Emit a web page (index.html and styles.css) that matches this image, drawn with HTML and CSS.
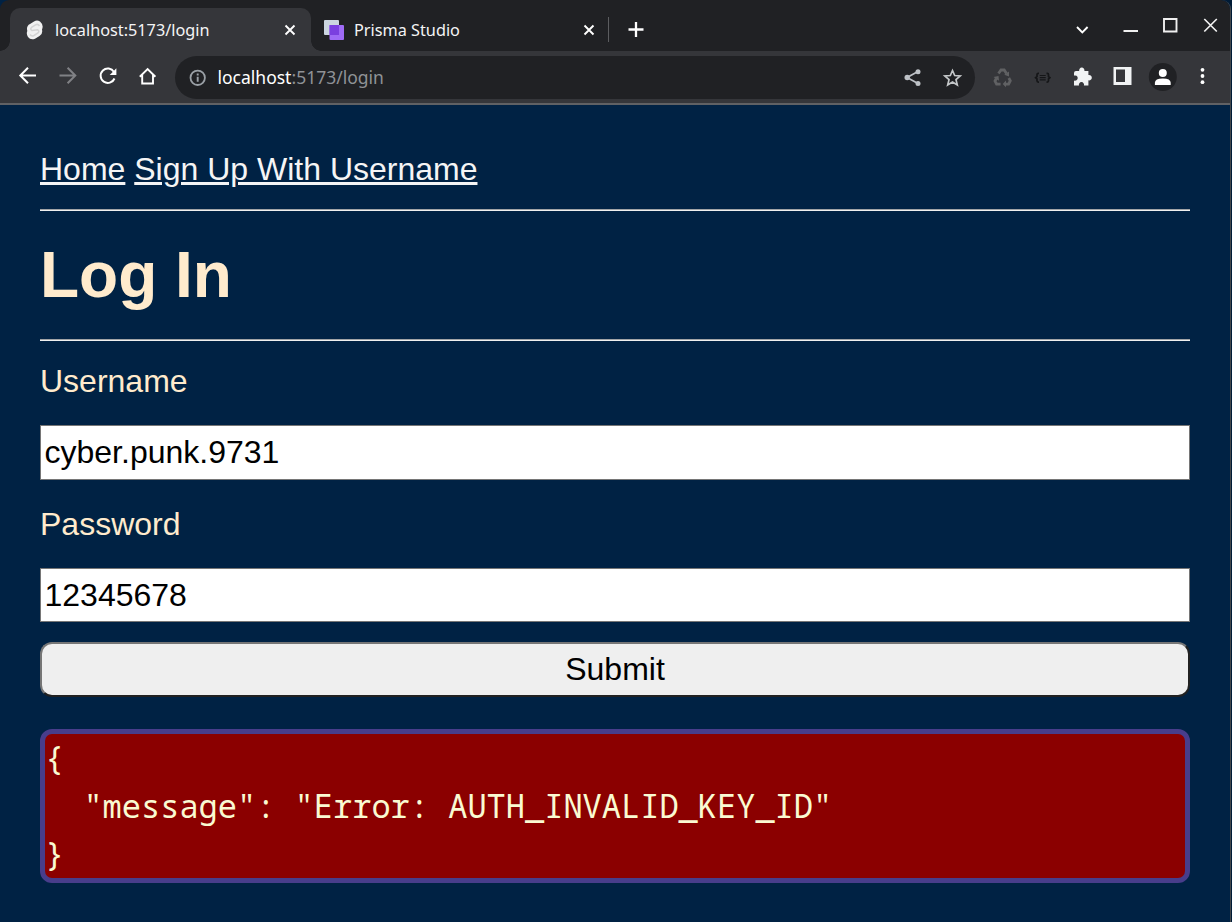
FILE: index.html
```html
<!DOCTYPE html>
<html lang="en">
<head>
<meta charset="utf-8">
<title>localhost:5173/login</title>
<link rel="stylesheet" href="styles.css">
</head>
<body>
<div class="window">
  <header class="tabstrip">
    <div class="tab tab-active">
      <svg class="favicon" width="20" height="20" viewBox="0 0 20 20"><path d="M9 1.500Q12-.5 15 1.500Q19 5 17 9.500Q18 14 14.500 16L10 18.800Q5.500 20.500 3 17Q1 14 2.300 11Q1 6 5 4Z" fill="#f1f1f1"/><path d="M14.500 6Q13 3.500 10.500 4.800L6.500 7.400Q4.600 9.500 7 10.500L12.500 9.700Q15 11 13 13L9 15.500Q6.500 16.700 5 14.500" fill="none" stroke="#d4d4d4" stroke-width="1.500"/></svg>
      <span class="tab-title">localhost:5173/login</span>
      <svg class="tab-close" width="12" height="12" viewBox="0 0 12 12"><path d="M1.500 1.500l9 9M10.500 1.500l-9 9" stroke="#fff" stroke-width="1.900"/></svg>
    </div>
    <div class="tab tab-idle">
      <svg class="favicon" width="22" height="22" viewBox="0 0 22 22"><rect x="1" y="1" width="15" height="15" rx="1" fill="#cbd5e0"/><rect x="6.500" y="6" width="14.500" height="15" rx="1" fill="#9f6bf6"/><path d="M6.500 6H16v10H6.500z" fill="#7b3fe0"/></svg>
      <span class="tab-title">Prisma Studio</span>
      <svg class="tab-close" width="12" height="12" viewBox="0 0 12 12"><path d="M1.500 1.500l9 9M10.500 1.500l-9 9" stroke="#fff" stroke-width="1.900"/></svg>
    </div>
    <span class="tab-divider"></span>
    <svg class="new-tab" width="16" height="16" viewBox="0 0 16 16"><path d="M8 1v15M.5 8.500h15" stroke="#fff" stroke-width="2.300"/></svg>
    <div class="window-controls">
      <svg class="tab-search" width="40" height="50" viewBox="0 0 40 50"><path d="M15 27l5.300 5.300L25.600 27" fill="none" stroke="#fff" stroke-width="1.900"/></svg>
      <svg width="40" height="50" viewBox="0 0 40 50"><path d="M13.500 31h14.500" stroke="#f0f0f0" stroke-width="2"/></svg>
      <svg width="40" height="50" viewBox="0 0 40 50"><path d="M14 19h12.500v12.500H14z" fill="none" stroke="#f0f0f0" stroke-width="1.900"/></svg>
      <svg width="40" height="50" viewBox="0 0 40 50"><path d="M14.300 19l12.500 12.500M26.800 19L14.300 31.500" stroke="#f0f0f0" stroke-width="1.700"/></svg>
    </div>
  </header>

  <div class="toolbar">
    <svg class="tool" viewBox="0 0 40 40"><path d="M28 19.500H12.500M20 11.800L12.300 19.500l7.700 7.700" fill="none" stroke="#fff" stroke-width="2"/></svg>
    <svg class="tool" viewBox="0 0 40 40"><path d="M11.500 19.500H27M19.600 11.800l7.700 7.700-7.700 7.700" fill="none" stroke="#808185" stroke-width="2"/></svg>
    <svg class="tool" viewBox="0 0 40 40"><path d="M26 16A7.200 7.200 0 1 0 26.500 22.500" fill="none" stroke="#fff" stroke-width="2"/><path d="M28.400 12.300V19h-6.700z" fill="#fff"/></svg>
    <svg class="tool" viewBox="0 0 40 40"><path d="M11.800 20.700L19.600 13l7.800 7.700M14.200 19v8.500H25V19" fill="none" stroke="#fff" stroke-width="1.900"/></svg>
    <div class="omnibox">
      <svg width="18" height="18" viewBox="0 0 18 18"><circle cx="8.700" cy="8.800" r="7.200" fill="none" stroke="#9aa0a6" stroke-width="1.800"/><path d="M8.700 4.600v1.900M8.700 7.800v5" stroke="#9aa0a6" stroke-width="1.900"/></svg>
      <span class="url">localhost<span class="url-path">:5173/login</span></span>
      <svg class="tool" viewBox="0 0 40 40"><path d="M25 13.500L14 19.500 25 25.500" fill="none" stroke="#bdc1c6" stroke-width="1.700"/><g fill="#bdc1c6"><circle cx="25" cy="13.700" r="2.500"/><circle cx="14.200" cy="19.500" r="2.700"/><circle cx="25" cy="25.500" r="2.500"/></g></svg>
      <svg class="tool" viewBox="0 0 40 40"><path d="M19.500 12.500l2.200 5 5.500.5-4.200 3.600 1.300 5.400-4.800-2.900-4.800 2.900 1.300-5.400-4.200-3.600 5.500-.5z" fill="none" stroke="#c4c7c9" stroke-width="1.700"/></svg>
    </div>
    <svg class="tool" viewBox="0 0 40 40"><g fill="none" stroke="#606163" stroke-width="2.800"><path d="M16.500 17.500l2.500-3.500h3.200l2.300 3.500M14.300 22.500l-1.300 2.500 1.600 3.200h4M26.800 22l1.500 2.700-1.700 3.500h-4"/></g><path d="M27 15.500v5l-4.700-1.800zM11.500 21l5-1 .5 4.800zM24 24.500v6.800l-3.300-3.400z" fill="#606163"/></svg>
    <svg class="tool" viewBox="0 0 40 40"><path d="M17 17.300h-.7q-1.300 0-1.300 1.300v1.900l-1.400 1.200 1.400 1.200v1.900q0 1.300 1.300 1.300h.7M24.500 17.300h.7q1.300 0 1.300 1.300v1.900l1.400 1.200-1.400 1.200v1.900q0 1.300-1.300 1.300h-.7" fill="none" stroke="#151618" stroke-width="1.700"/><path d="M17.700 19.500h6M17.700 21.700h6M17.700 23.900h6" stroke="#151618" stroke-width="1.200"/></svg>
    <svg class="tool" viewBox="0 0 40 40"><path d="M14 15h3.200a2.700 2.700 0 1 1 5.200 0h4v4.100a2.700 2.700 0 1 1 0 5.200v5.200h-4.500a2.600 2.600 0 1 0-4.900 0h-5v-4.900a2.700 2.700 0 1 0 0-5V17q0-2 2-2z" fill="#f1f3f4"/></svg>
    <svg class="tool" viewBox="0 0 40 40"><path fill-rule="evenodd" d="M11.500 11H29.500v18H11.500zM14 13.500v12.500h9V13.500z" fill="#f1f3f4"/></svg>
    <svg class="tool" viewBox="0 0 40 40"><circle cx="20.800" cy="21" r="14" fill="#202124"/><circle cx="20.800" cy="17" r="4" fill="#fff"/><path d="M12.900 29v-2.300q0-4.300 7.900-4.300t7.900 4.300v2.300z" fill="#fff"/></svg>
    <svg class="tool" viewBox="0 0 40 40"><g fill="#fff"><circle cx="20.500" cy="13.800" r="1.900"/><circle cx="20.500" cy="20" r="1.900"/><circle cx="20.500" cy="26.200" r="1.900"/></g></svg>
  </div>

  <main class="page">
    <nav class="links"><a class="link" href="#">Home</a> <a class="link" href="#">Sign Up With Username</a></nav>
    <hr class="rule">
    <h1 class="heading">Log In</h1>
    <hr class="rule">
    <form class="form">
      <label class="label" for="username">Username</label>
      <input class="input" id="username" type="text" value="cyber.punk.9731">
      <label class="label" for="password">Password</label>
      <input class="input input-last" id="password" type="text" value="12345678">
      <button class="submit" type="button">Submit</button>
    </form>
    <pre class="error">{
  "message": "Error: AUTH_INVALID_KEY_ID"
}</pre>
  </main>
</div>
</body>
</html>
```
FILE: styles.css
```css
* { box-sizing: border-box; }
body { margin: 0; background: #001b36; overflow: hidden; }
svg { display: block; flex: none; }
.window {
  display: flex;
  flex-direction: column;
  width: 1231px;
  height: 922px;
  border-right: 1px solid #44484c;
  border-top-right-radius: 9px;
  background: #002244;
  overflow: hidden;
}
.tabstrip {
  display: flex;
  align-items: flex-end;
  height: 51px;
  flex: none;
  padding-left: 10px;
  background: #202124;
  border-radius: 9px 9px 0 0;
  font: 16.25px/22px "Noto Sans", sans-serif;
  color: #f4f4f5;
}
.tab { display: flex; align-items: center; height: 43px; }
.tab-active {
  position: relative;
  width: 301px;
  padding: 0 15px;
  background: #35363a;
  border-radius: 10px 10px 0 0;
}
.tab-active::before, .tab-active::after {
  content: "";
  position: absolute;
  bottom: 0;
  width: 10px;
  height: 10px;
}
.tab-active::before { left: -10px; background: radial-gradient(circle at 0 0, #202124 9.5px, #35363a 10px); }
.tab-active::after { right: -10px; background: radial-gradient(circle at 100% 0, #202124 9.5px, #35363a 10px); }
.tab-idle { width: 297px; padding: 0 13px 0 12px; }
.favicon { margin-right: 10px; }
.tab-idle .favicon { margin-right: 9px; }
.tab-title { flex: 1; white-space: nowrap; }
.tab-divider { width: 1px; height: 25px; margin-bottom: 9px; background: #5c5d60; }
.new-tab { margin: 0 0 14px 19px; }
.window-controls { display: flex; height: 51px; margin-left: auto; }
.tab-search { margin-right: 8px; }
.toolbar {
  display: flex;
  align-items: flex-start;
  height: 54px;
  flex: none;
  padding: 5px 8px 0;
  background: #35363a;
  border-bottom: 2px solid #606164;
}
.tool { width: 40px; height: 40px; }
.omnibox {
  display: flex;
  align-items: center;
  width: 800px;
  height: 43px;
  margin: 0 7px;
  padding: 0 2px 0 14px;
  border-radius: 22px;
  background: #202124;
  font: 17.5px/24px "Noto Sans", sans-serif;
  color: #fff;
}
.url { flex: 1; margin-left: 10.5px; padding-bottom: 2px; }
.url-path { color: #8f9296; }
.page {
  flex: 1;
  padding: 45px 40px 0;
  font: 32px/38px "Liberation Sans", Arial, sans-serif;
  color: #ffebcd;
}
.links { height: 38px; }
.link { color: #f5f5f5; }
.rule { height: 2px; margin: 21px 0 0; border: 0; background: #f0f0f0; border-top: 1px solid #a0a3a6; }
.heading { margin: 27px 0 0; font-size: 64px; line-height: 74px; }
.heading + .rule { margin-top: 27px; }
.form { display: flex; flex-direction: column; }
.label { margin: 21px 0 25px; height: 38px; }
.input {
  height: 55px;
  border: 1px solid #767676;
  padding: 0 3.5px;
  background: #fff;
  color: #000;
  font: 32px "Liberation Sans", Arial, sans-serif;
  outline: none;
}
.input + .label { margin-top: 25px; }
.input-last { height: 54px; }
.submit {
  height: 55px;
  margin-top: 20px;
  padding-bottom: 2px;
  border: 2px solid;
  border-color: #767676 #212121 #212121 #767676;
  border-radius: 12px;
  background: #efefef;
  color: #000;
  font: 32px "Liberation Sans", Arial, sans-serif;
}
.error {
  height: 154px;
  margin: 32px 0 0;
  padding: 0;
  border: 5px solid #483d8b;
  border-radius: 12px;
  background: #8b0000;
  color: #fafad2;
  font: 32px/48px "Noto Sans Mono", "DejaVu Sans Mono", monospace;
}
```
